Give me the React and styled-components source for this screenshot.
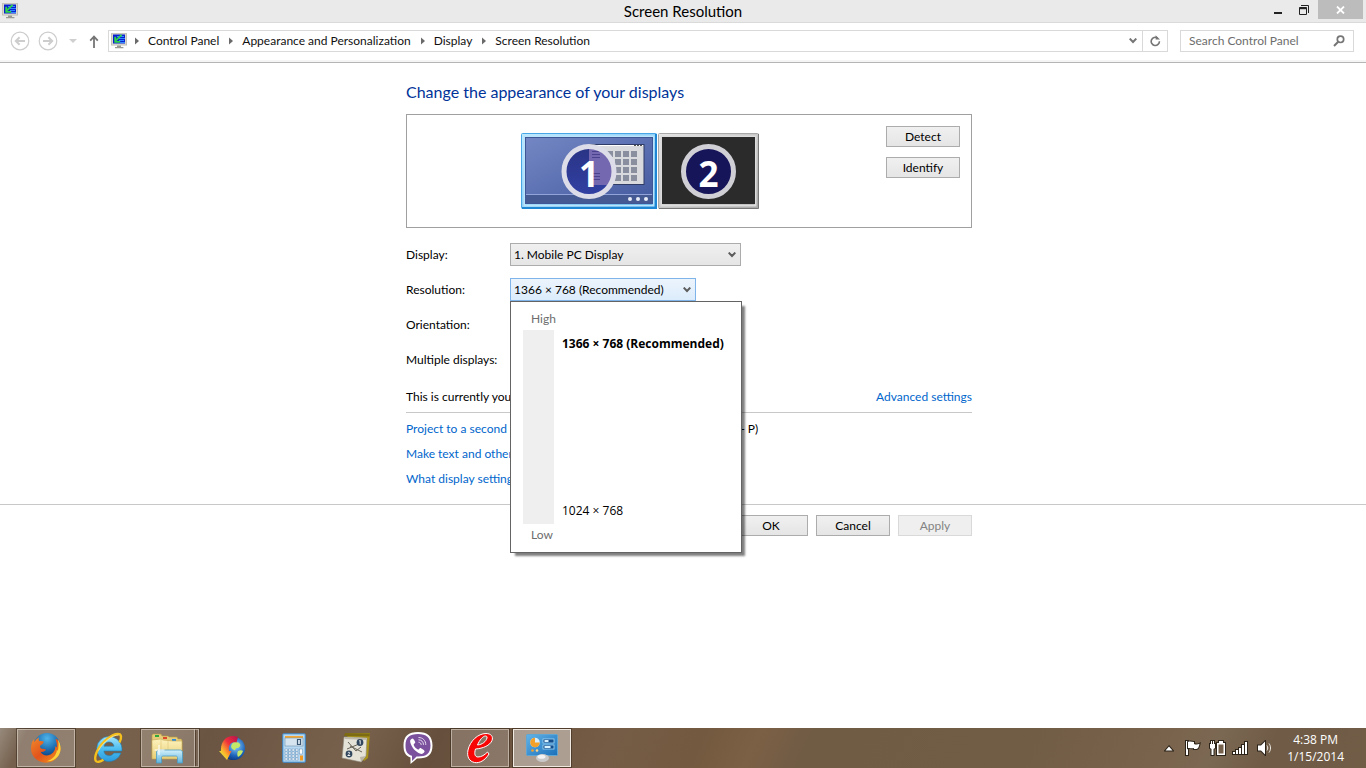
import React, { useState } from 'react';
import styled, { createGlobalStyle, css } from 'styled-components';

const GlobalStyle = createGlobalStyle`
  * {
    box-sizing: border-box;
  }

  body {
    margin: 0;
    background: #fff;
    color: #000;
    font-family: Lato, 'Open Sans', sans-serif;
    font-size: 12px;
    line-height: 16px;
  }

  button, input, select {
    font: inherit;
    color: inherit;
  }
`;

const CRUMBS = ['Control Panel', 'Appearance and Personalization', 'Display', 'Screen Resolution'];

/* ---------- icons ---------- */

const ScreenIcon = () => (
  <svg width="16" height="16" viewBox="0 0 16 16" aria-hidden="true">
    <rect x="0" y="0" width="16" height="12.5" rx="0.6" fill="#bdbbb0" />
    <rect x="0.8" y="0.6" width="14.4" height="11.2" fill="#d9d8cf" />
    <rect x="2" y="1.5" width="12" height="9" fill="#0a1fd0" />
    <path d="M6 3.5h7M8 5.5h6M8 7.5h5M9 9.5h5" stroke="#2f8bff" strokeWidth="1" />
    <path d="M10.6 1.8L5 7.4M4.2 3.8v5h5" stroke="#2ed34a" strokeWidth="1.8" fill="none" />
    <path d="M6 12.5h4v1.4h2.4v1.3H4v-1.3h2z" fill="#9a9a92" />
  </svg>
);

const ArrowCircle = ({ flip }) => (
  <svg width="20" height="20" viewBox="0 0 20 20" aria-hidden="true">
    <circle cx="10" cy="10" r="8.8" fill="none" stroke="#cdcdcd" strokeWidth="1.2" />
    <path
      d={flip ? 'M5 10h9M10.4 6.2l3.8 3.8-3.8 3.8' : 'M15 10H6M9.6 6.2L5.8 10l3.8 3.8'}
      fill="none"
      stroke="#cdcdcd"
      strokeWidth="2"
    />
  </svg>
);

const UpArrow = () => (
  <svg width="10" height="13" viewBox="0 0 10 13" aria-hidden="true">
    <path d="M5 13V2M1.2 5.6L5 1.6l3.8 4" fill="none" stroke="#757575" strokeWidth="1.8" />
  </svg>
);

const SmallTriangle = () => (
  <svg width="4" height="8" viewBox="0 0 4 8" aria-hidden="true">
    <path d="M0 0.5L4 4L0 7.5z" fill="#6a6a6a" />
  </svg>
);

const Chevron = ({ color = '#5c5c5c' }) => (
  <svg width="8" height="6" viewBox="0 0 8 6" aria-hidden="true">
    <path d="M0.7 0.6L4 4L7.3 0.6" fill="none" stroke={color} strokeWidth="2" />
  </svg>
);

const RefreshIcon = () => (
  <svg width="11" height="12" viewBox="0 0 11 12" aria-hidden="true">
    <path d="M7.6 3A4.1 4.1 0 1 0 9.4 6.2" fill="none" stroke="#757575" strokeWidth="1.6" />
    <path d="M5.6 0.2v4.4h4.4z" fill="#757575" />
  </svg>
);

const SearchIcon = () => (
  <svg width="12" height="12" viewBox="0 0 12 12" aria-hidden="true">
    <circle cx="7.5" cy="4.3" r="3.2" fill="none" stroke="#757575" strokeWidth="1.7" />
    <path d="M5.2 6.8L1 11" stroke="#757575" strokeWidth="2" />
  </svg>
);

const MinimizeIcon = () => (
  <svg width="12" height="12" viewBox="1 0 12 12" aria-hidden="true">
    <rect x="2" y="8" width="8" height="2" fill="#222" />
  </svg>
);

const RestoreIcon = () => (
  <svg width="12" height="12" viewBox="1 0 12 12" aria-hidden="true">
    <path d="M3 1.5h7.5V9" fill="none" stroke="#222" />
    <path d="M1.5 3.5h7v7h-7z" fill="none" stroke="#222" />
    <path d="M1 4.5h8" stroke="#222" strokeWidth="1.4" />
  </svg>
);

const CloseIcon = () => (
  <svg width="9" height="8" viewBox="0 0 9 8" aria-hidden="true">
    <path d="M1 0.5L8 7.5M8 0.5L1 7.5" stroke="#fff" strokeWidth="1.8" />
  </svg>
);

const FirefoxIcon = () => (
  <svg width="32" height="32" viewBox="0 0 32 32" aria-hidden="true">
    <defs>
      <radialGradient id="ffGlobe" cx="0.5" cy="0.2" r="0.8">
        <stop offset="0" stopColor="#4fb4e8" />
        <stop offset="0.6" stopColor="#1763a8" />
        <stop offset="1" stopColor="#0d2f66" />
      </radialGradient>
      <linearGradient id="ffFox" x1="0" y1="0" x2="1" y2="1">
        <stop offset="0" stopColor="#f08a2c" />
        <stop offset="0.5" stopColor="#e2531b" />
        <stop offset="1" stopColor="#f39a1f" />
      </linearGradient>
    </defs>
    <circle cx="17" cy="14.5" r="13.4" fill="url(#ffGlobe)" />
    <path d="M27 7c4 5 5 12 1 17.500C24 30 17.500 32 11.500 30 4 27.500 0 21 1.200 14 1.500 11 2.500 9 3.500 7.500L4.500 10C5.500 8 7 6.300 9 5.200c-.6 1.600-.3 2.800.3 4 1.600-.4 3-.2 4.500.4-.3 2-2 3-3.600 4.200-.3 1.200 0 2 .8 2.600 1.500.7 3.600.2 5 1.200-.6 2-3.500 2.600-5.500 2.200 1.500 3.400 6 4.400 9.300 3 3.600-1.500 5.700-4.800 5.400-8.800l1.500 1.500c.5-3-.1-6-1.200-8z" fill="url(#ffFox)" />
    <path d="M28 7.500c3.500 5.500 3.500 12 .2 16.500-3 4-7.500 5.600-11.500 5.200 6-1.600 9.600-6 10.200-11.200l1 .8c.9-4 .8-8 .1-11.300z" fill="#fbd43c" />
  </svg>
);

const IeIcon = () => (
  <svg width="32" height="32" viewBox="0 0 32 32" aria-hidden="true">
    <defs>
      <linearGradient id="ieBody" x1="0" y1="0" x2="0" y2="1">
        <stop offset="0" stopColor="#a4e4fb" />
        <stop offset="0.5" stopColor="#4cbdf0" />
        <stop offset="1" stopColor="#2a9ade" />
      </linearGradient>
    </defs>
    <path d="M17 4.500a12.500 12.500 0 1 0 12 16.500h-7.300c-1 1.800-2.600 2.700-4.600 2.700-2.900 0-5-1.900-5.200-4.700h18A13 13 0 0 0 17 4.500zM12 14.200c.5-2.600 2.400-4.200 5-4.200s4.600 1.600 5 4.200z" fill="url(#ieBody)" stroke="#1d7fb8" strokeWidth="0.6" />
    <path d="M27.500 10.500C30 5.500 29.500 2 26 2 20 2 10 9.500 5.500 18.500 2 25.500 2.500 30.500 6.800 29.800c1.500-.2 3-.9 4.600-2" fill="none" stroke="#f5bf1d" strokeWidth="2.400" />
    <path d="M26.500 3C20.500 3 11 10 6.500 18.500" fill="none" stroke="#fff0a0" strokeWidth="0.800" />
  </svg>
);

const ExplorerIcon = () => (
  <svg width="32" height="32" viewBox="0 0 32 32" aria-hidden="true">
    <defs>
      <linearGradient id="folder" x1="0" y1="0" x2="0" y2="1">
        <stop offset="0" stopColor="#fdf3bd" />
        <stop offset="1" stopColor="#e8cd75" />
      </linearGradient>
      <linearGradient id="folderClip" x1="0" y1="0" x2="0" y2="1">
        <stop offset="0" stopColor="#d3f0fb" />
        <stop offset="1" stopColor="#5eb3dd" />
      </linearGradient>
    </defs>
    <path d="M1 8V3l1-1h8l1 2h6l1 1h8l1 2h3l1 1v18H1z" fill="#e6cc79" stroke="#b99a45" strokeWidth="0.600" />
    <rect x="4" y="3" width="4" height="2" fill="#2fa83d" />
    <rect x="12" y="5" width="4" height="2" fill="#dd4a2b" />
    <rect x="21" y="7" width="4" height="2" fill="#2c8de0" />
    <path d="M1 8l9-1 2 1 10 1h9v18H1z" fill="url(#folder)" stroke="#c3a552" strokeWidth="0.600" />
    <path d="M17 9v18M10 7v19" stroke="#e0c87c" strokeWidth="0.700" />
    <path d="M5.500 31V19.500l2-1.500h22l2 1.500V31h-5v-5.500c0-1-.8-1.500-1.800-1.500h-12.400c-1 0-1.800.5-1.800 1.500V31z" fill="url(#folderClip)" stroke="#4a9cc6" strokeWidth="0.800" />
    <path d="M8 13v10M3.500 18h10" stroke="#fff" strokeWidth="1" />
  </svg>
);

const DownloadGlobeIcon = () => (
  <svg width="28" height="28" viewBox="0 0 28 28" aria-hidden="true">
    <defs>
      <linearGradient id="idmArrow" x1="1" y1="0" x2="0" y2="1">
        <stop offset="0" stopColor="#b5124f" />
        <stop offset="0.400" stopColor="#ef2f3c" />
        <stop offset="0.700" stopColor="#fbb52c" />
        <stop offset="0.850" stopColor="#e3e43a" />
        <stop offset="1" stopColor="#7fd321" />
      </linearGradient>
      <radialGradient id="idmGlobe" cx="0.600" cy="0.400" r="0.700">
        <stop offset="0" stopColor="#8fd0f9" />
        <stop offset="0.600" stopColor="#1c63bb" />
        <stop offset="1" stopColor="#0a2c6e" />
      </radialGradient>
    </defs>
    <circle cx="15.500" cy="14.500" r="11.500" fill="url(#idmGlobe)" />
    <path d="M14 10c2-3 7-2 8 0s-1 4-3 4-1 3-3 2-4-3-2-6zM20 17c2-1 4-1 5 0-1 3-3 5-5 6-1-2-1-4 0-6z" fill="#c3e86a" />
    <path d="M20 3C11-.5 2.500 5 3 17H1l8 9 4.500-9H11C10 11 13 7.500 18.500 8.500z" fill="url(#idmArrow)" />
  </svg>
);

const CalculatorIcon = () => (
  <svg width="24" height="32" viewBox="0 0 24 32" aria-hidden="true">
    <rect x="0.500" y="1.500" width="23" height="29" rx="1.500" fill="#8ebfe4" stroke="#4d83b4" />
    <rect x="2" y="3" width="20" height="26" fill="#b7d8f0" />
    <rect x="3" y="4" width="18" height="2" fill="#f2a635" />
    <rect x="3" y="6" width="18" height="8" fill="#d6e4ef" stroke="#6d8fb0" strokeWidth="0.600" />
    <path d="M15.500 7.500h3v5h-3z" fill="none" stroke="#3b5876" strokeWidth="1.200" />
    {[17, 20, 23, 26].map((y) =>
      [3, 6.5, 10, 13.5].map((x) => <rect key={`${x}-${y}`} x={x} y={y} width="2.500" height="2" fill="#fff" stroke="#5f8db8" strokeWidth="0.500" />)
    )}
    <rect x="17.500" y="17" width="3" height="5" fill="#fff" stroke="#5f8db8" strokeWidth="0.500" />
    <rect x="18" y="23.500" width="3" height="5" fill="#f19a25" />
  </svg>
);

const JournalIcon = () => (
  <svg width="32" height="32" viewBox="0 0 32 32" aria-hidden="true">
    <path d="M5 1h25l-2 25-4 3z" fill="#a99419" />
    <path d="M5 1l25 .5-.5 3L4 4z" fill="#7d6b14" />
    <path d="M4 5l23 1-1 18-5 6L2 26z" fill="#e5e2d8" stroke="#8e8a7c" strokeWidth="0.600" />
    <path d="M26 24l-5 6-1-5z" fill="#b9b4a5" />
    <path d="M5 5l22 1v2L4.500 7z" fill="#bdb8a8" />
    <path d="M8 10l8 9 5-4M7 17l12-5M10 14l12 6" fill="none" stroke="#676256" strokeWidth="1" />
    <circle cx="20" cy="10.500" r="3.400" fill="#30475e" />
    <circle cx="9" cy="22" r="3.400" fill="#30475e" />
    <path d="M19.200 9l1-.6v4M7.800 20.800c1.800-1.500 2.800.3 0 2.700h2.500" fill="none" stroke="#fff" strokeWidth="0.900" />
  </svg>
);

const ViberIcon = () => (
  <svg width="32" height="34" viewBox="0 0 32 34" aria-hidden="true">
    <path d="M16 1C6.500 1 1.500 5 1.500 14.500c0 6.500 2 10.300 7 12V33l6.500-5.500H16c9.500 0 14.500-3.500 14.500-13S25.500 1 16 1z" fill="#fff" />
    <path d="M16 3C7.500 3 3.500 6.500 3.500 14.500c0 5.500 1.500 8.800 6.500 10.300V30l4.500-4.500H16c8.500 0 12.500-3 12.500-11S24.500 3 16 3z" fill="#7b519d" />
    <path d="M10.500 7.500c-1.500.5-2.700 1.600-2.300 3.500 1.300 5.500 5 9.700 10.300 11.800 1.700.5 3-.4 4-2 .4-.9 0-1.400-3.500-3.600-1-.4-1.600.5-2.300 1.300-1 .4-5-2.500-5-5.300.6-.8 1.800-1.200 1.500-2.300-1-2-1.900-3.300-2.700-3.400z" fill="#fff" />
    <path d="M16.500 11.200c1.700.1 2.600 1.100 2.700 2.700M16.500 8.800c3 .1 4.900 2 5 5M16.500 6.500c4.500.1 7.200 3 7.300 7.400" fill="none" stroke="#e6dcf0" strokeWidth="1" />
  </svg>
);

const RedEIcon = () => (
  <svg width="30" height="32" viewBox="0 0 30 32" aria-hidden="true">
    <path
      d="M24 22c-4 6.500-9.500 9.500-14.500 8.500C4.500 29.500 1.500 25 3 18 5 9 13 1.500 21 1.500c5 0 7.500 3 6 7-2 5-9 8-16.500 8.500-1.500 5-.5 8 2.500 8 3.500 0 6.500-2 9.500-5zM12.500 13c5-.5 8.500-3.500 9.500-7 .3-1.500-.5-2-1.500-2-2.500 0-6 4-8 9z"
      fill="#f80606"
      stroke="#fff"
      strokeWidth="1"
    />
  </svg>
);

const ControlPanelIcon = () => (
  <svg width="34" height="30" viewBox="0 0 34 30" aria-hidden="true">
    <defs>
      <linearGradient id="cpScreen" x1="0" y1="0" x2="1" y2="1">
        <stop offset="0" stopColor="#62b3e8" />
        <stop offset="1" stopColor="#1b70b9" />
      </linearGradient>
    </defs>
    <rect x="1.500" y="1.500" width="31" height="21" rx="1" fill="url(#cpScreen)" stroke="#5fa6d4" />
    <circle cx="10" cy="9.500" r="4.800" fill="#d9edf8" />
    <path d="M10 4.700a4.800 4.800 0 1 0 4.800 4.800H10z" fill="#f4a12b" />
    <rect x="18" y="6" width="11" height="4" fill="#124c8c" stroke="#a6d8f4" strokeWidth="0.800" />
    <rect x="18" y="12" width="11" height="4" fill="#124c8c" stroke="#a6d8f4" strokeWidth="0.800" />
    <path d="M19.500 8h4M19.500 14h6" stroke="#d9f2ff" strokeWidth="2" />
    <circle cx="7.500" cy="17.500" r="1.300" fill="#f4a12b" />
    <circle cx="12" cy="17.500" r="1.300" fill="#ffd38a" />
    <ellipse cx="17.500" cy="25" rx="6.500" ry="4" fill="#c9c9c9" />
    <ellipse cx="16.500" cy="23.800" rx="4" ry="2" fill="#f2f2f2" />
  </svg>
);

const trayOutline = { stroke: '#2b2218', strokeWidth: 2, paintOrder: 'stroke' };

const TrayArrow = () => (
  <svg width="10" height="7" viewBox="0 0 10 7" aria-hidden="true">
    <path d="M5 1.500L8.500 5.500h-7z" fill="#fff" {...trayOutline} />
  </svg>
);

const FlagIcon = () => (
  <svg width="18" height="16" viewBox="0 0 18 16" aria-hidden="true">
    <path d="M2 1h2v14H2z" fill="#fff" {...trayOutline} />
    <path d="M4 2c2-1 4 0 6 0v6c-2 1-4-.5-6 0zM10 4c2 .800 4 .600 5.500-.200-.5 3-1.500 5-3 5.200H10z" fill="#fff" {...trayOutline} />
  </svg>
);

const BatteryIcon = () => (
  <svg width="18" height="16" viewBox="0 0 18 16" aria-hidden="true">
    <path d="M3 1h1v3h1V1h1v3h1v4L5.500 9V15h-2V9L2 8V4h1z" fill="#fff" {...trayOutline} />
    <path d="M9 3h2V1h4v2h2v12H9z" fill="#fff" {...trayOutline} />
    <path d="M10.500 4.500h5v9h-5z" fill="#75604c" />
  </svg>
);

const SignalIcon = () => (
  <svg width="18" height="14" viewBox="0 0 18 14" aria-hidden="true">
    {[2, 4, 6, 9, 12].map((h, i) => (
      <rect key={h} x={1 + i * 3} y={13 - h} width="2" height={h} fill="#fff" {...trayOutline} />
    ))}
  </svg>
);

const VolumeIcon = () => (
  <svg width="16" height="16" viewBox="0 0 16 16" aria-hidden="true">
    <path d="M1 5.500h3L8 1.500v13l-4-4H1z" fill="#fff" {...trayOutline} />
    <path d="M10 5.500c1 1.500 1 3.500 0 5M12 3.500c2 2.700 2 6.300 0 9" fill="none" stroke="#f0ece6" strokeWidth="1" />
  </svg>
);

const WindowsLogo = styled(({ className }) => (
  <svg className={className} width="14" height="12" viewBox="0 0 14 12" aria-hidden="true">
    <path d="M0 2l6-1v5H0zM7 1l7-1v6H7zM0 7h6v5l-6-1zM7 7h7v5H7z" fill="#1b6fb5" />
  </svg>
))`
  margin: 0 3px;
  vertical-align: middle;
`;

const MonitorOne = () => (
  <svg width="137" height="76" viewBox="0 0 137 76" aria-hidden="true">
    <defs>
      <linearGradient id="m1Frame" x1="0" y1="0" x2="1" y2="1">
        <stop offset="0" stopColor="#bfe9ff" />
        <stop offset="0.500" stopColor="#8fd0f8" />
        <stop offset="1" stopColor="#1d8fe0" />
      </linearGradient>
      <linearGradient id="m1Screen" x1="0" y1="0" x2="1" y2="1">
        <stop offset="0" stopColor="#7487c4" />
        <stop offset="1" stopColor="#435a9f" />
      </linearGradient>
      <linearGradient id="m1Disc" x1="0" y1="0" x2="0" y2="1">
        <stop offset="0" stopColor="#2a3485" />
        <stop offset="1" stopColor="#3140a3" />
      </linearGradient>
    </defs>
    <rect x="0.500" y="0.500" width="135" height="75" rx="1" fill="url(#m1Frame)" stroke="#46a6e6" />
    <path d="M135 1v74H1" fill="none" stroke="#1e86d2" strokeWidth="2" />
    <rect x="3.500" y="3.500" width="129" height="69" fill="none" stroke="#b9e4fb" strokeWidth="2" />
    <rect x="4.500" y="4.500" width="127" height="66" fill="url(#m1Screen)" stroke="#3f5696" />
    <path d="M5 62h126v8H5z" fill="#455a92" />
    <path d="M5 61.500h126" stroke="#91a3d8" />
    <rect x="68" y="11.500" width="55" height="40" fill="#d8dadd" stroke="#2f3c66" />
    <path d="M68 12.500h54" stroke="#fff" />
    <path d="M113 12.500h8" stroke="#555" strokeDasharray="2 1" />
    {[18, 26, 34, 42].map((y) =>
      [86, 94, 102, 110].map((x) => <rect key={`${x}-${y}`} x={x} y={y} width="6" height="6" fill="#8a8f9f" />)
    )}
    <circle cx="68" cy="38.500" r="25" fill="url(#m1Disc)" />
    <path d="M68 13.500a25 25 0 0 1 21 38.500H68z" fill="#7468b0" />
    <path d="M71 18.500h8M71 21.500h8M71 24.500h8M71 40.500h8M71 43.500h8M71 46.500h8" stroke="#4a428c" />
    <circle cx="68" cy="38.500" r="25" fill="none" stroke="#dddde9" strokeWidth="5" />
    <g fill="#e8ecf8">
      <circle cx="109" cy="66" r="2" />
      <circle cx="117" cy="66" r="2" />
      <circle cx="125" cy="66" r="2" />
    </g>
  </svg>
);

const MonitorTwo = () => (
  <svg width="102" height="76" viewBox="0 0 102 76" aria-hidden="true">
    <defs>
      <linearGradient id="m2Frame" x1="0" y1="0" x2="1" y2="1">
        <stop offset="0" stopColor="#e6e6e6" />
        <stop offset="1" stopColor="#a8a8a8" />
      </linearGradient>
    </defs>
    <rect x="0.500" y="0.500" width="100" height="75" rx="1" fill="url(#m2Frame)" stroke="#a8a8a8" />
    <path d="M100.500 1v74.500H1" fill="none" stroke="#777" strokeWidth="1" />
    <rect x="3.500" y="3.500" width="94" height="69" fill="none" stroke="#dcdcdc" strokeWidth="2" />
    <rect x="4" y="4" width="93" height="67" fill="#2b2b2b" />
    <circle cx="50.500" cy="38.500" r="25" fill="#17155a" stroke="#d0cfd6" strokeWidth="5" />
  </svg>
);

/* ---------- window chrome ---------- */

const Page = styled.div`
  min-height: 100vh;
  display: flex;
  flex-direction: column;
`;

const TitleBar = styled.header`
  display: grid;
  grid-template-columns: 1fr auto 1fr;
  height: 23px;
  background: #eaeaea;
  border-bottom: 1px solid #dadada;
`;

const TitleIcon = styled.span`
  display: flex;
  align-items: center;
  padding-left: 2px;
`;

const WindowTitle = styled.h1`
  margin: 0;
  font-size: 15px;
  font-weight: 400;
  line-height: 22px;
`;

const WindowButtons = styled.div`
  display: flex;
  justify-content: flex-end;
  align-items: flex-start;
  padding-right: 3px;
`;

const WindowButton = styled.button`
  display: flex;
  align-items: center;
  justify-content: center;
  width: ${({ $close }) => ($close ? '45px' : '26px')};
  height: 19px;
  padding: 0;
  border: 0;
  background: ${({ $close }) => ($close ? '#bcbcbc' : 'transparent')};
`;

const Toolbar = styled.div`
  display: flex;
  align-items: center;
  height: 40px;
  padding: 0 12px 3px 10px;
  border-bottom: 1px solid #b5b5b5;
  box-shadow: inset 0 -2px #f5f5f5;
`;

const ToolButton = styled.button`
  display: flex;
  align-items: center;
  justify-content: center;
  width: ${({ $width }) => $width}px;
  height: 20px;
  padding: 0;
  border: 0;
  background: none;
`;

const AddressBar = styled.nav`
  display: flex;
  align-items: center;
  flex: 1;
  height: 22px;
  margin-right: 12px;
  padding-left: 2px;
  border: 1px solid #d9d9d9;
`;

const Crumbs = styled.ol`
  display: flex;
  flex: 1;
  gap: 2px;
  margin: 0;
  padding: 0;
  list-style: none;
`;

const Crumb = styled.li`
  display: flex;
  align-items: center;

  svg {
    margin: 0 9px 0 8px;
  }

  a {
    color: #111;
    text-decoration: none;
  }
`;

const RefreshCell = styled.div`
  display: flex;
  align-items: center;
  height: 100%;
  border-left: 1px solid #d9d9d9;
`;

const SearchBox = styled.label`
  display: flex;
  align-items: center;
  width: 174px;
  height: 22px;
  padding: 0 8px;
  border: 1px solid #d9d9d9;

  input {
    flex: 1;
    min-width: 0;
    padding: 0;
    border: 0;
    outline: 0;
    background: none;
  }

  input::placeholder {
    color: #6d6d6d;
    opacity: 1;
  }
`;

/* ---------- content ---------- */

const Main = styled.main`
  flex: 1;
`;

const Content = styled.div`
  max-width: 578px;
  margin: 0 auto;
  padding-left: 12px;
`;

const Heading = styled.h2`
  margin: 0;
  padding: 18px 0 12px;
  color: #003399;
  font-size: 16px;
  font-weight: 400;
  line-height: 21px;
`;

const Preview = styled.section`
  display: grid;
  grid-template-columns: 1fr auto;
  gap: 24px;
  height: 114px;
  padding: 11px;
  border: 1px solid #a0a0a0;
`;

const Monitors = styled.div`
  display: flex;
  justify-content: center;
  padding-top: 7px;
`;

const Monitor = styled.figure`
  display: grid;
  place-items: center;
  height: 76px;
  margin: 0;

  > * {
    grid-area: 1 / 1;
  }
`;

const MonitorNumber = styled.figcaption`
  color: #fff;
  font-family: 'Open Sans', sans-serif;
  font-size: 35px;
  font-weight: 700;
  line-height: 40px;
  padding-top: 5px;
`;

const PreviewButtons = styled.div`
  display: flex;
  flex-direction: column;
  gap: 10px;
`;

const Button = styled.button`
  width: 74px;
  height: 21px;
  padding: 0;
  border: 1px solid #acacac;
  background: linear-gradient(#f0f0f0, #e5e5e5);
  line-height: 19px;

  &:disabled {
    border-color: #d9d9d9;
    background: #efefef;
    color: #838383;
  }
`;

const Settings = styled.div`
  display: grid;
  grid-template-columns: 104px 1fr;
  grid-auto-rows: 23px;
  row-gap: 12px;
  align-items: center;
  padding: 15px 0 18px;
`;

const SelectWrap = styled.div`
  display: grid;
  align-items: center;
  position: relative;
  width: ${({ $width }) => $width}px;

  > select,
  > svg {
    grid-area: 1 / 1;
  }

  > svg {
    justify-self: end;
    margin-right: 5px;
    pointer-events: none;
  }
`;

const Select = styled.select`
  appearance: none;
  width: 100%;
  height: 23px;
  padding: 0 3px;
  border: 1px solid #acacac;
  border-radius: 0;
  outline: 0;
  background: linear-gradient(#f0f0f0, #e5e5e5);

  ${({ $open }) =>
    $open &&
    css`
      border-color: #7eb4ea;
      background: linear-gradient(#ecf4fc, #dcecfc);
    `}
`;

const Popup = styled.div`
  position: absolute;
  z-index: 1;
  top: 100%;
  left: 0;
  width: 232px;
  height: 252px;
  padding: 6px 12px;
  border: 1px solid #646464;
  background: #fff;
  box-shadow: 4px 4px 2px -1px rgba(0, 0, 0, 0.5);
`;

const PopupEdge = styled.div`
  padding-left: 8px;
  color: #6d6d6d;
  line-height: 22px;
`;

const SliderRow = styled.div`
  display: flex;
  gap: 8px;
  height: 194px;
`;

const Slider = styled.input`
  appearance: none;
  writing-mode: vertical-lr;
  direction: rtl;
  width: 31px;
  height: 194px;
  margin: 0;
  background: #efefef;

  &::-webkit-slider-thumb {
    appearance: none;
    width: 31px;
    height: 11px;
    background: transparent;
  }
`;

const SliderLabels = styled.div`
  display: flex;
  flex-direction: column;
  justify-content: space-between;
  padding: 6px 0 5px;
  font-family: 'Open Sans', sans-serif;
  white-space: nowrap;
`;

const SliderLabel = styled.span`
  font-weight: ${({ $active }) => ($active ? 700 : 400)};
`;

const MainDisplay = styled.div`
  display: flex;
  justify-content: space-between;
  padding-bottom: 7px;
  border-bottom: 1px solid #c8c8c8;
`;

const Link = styled.a`
  color: #0066cc;
  text-decoration: none;
`;

const Links = styled.div`
  display: flex;
  flex-direction: column;
  gap: 9px;
  padding: 8px 0 17px;

  p {
    height: 16px;
    margin: 0;
  }
`;

const Footer = styled.footer`
  border-top: 1px solid #c8c8c8;
`;

const FooterButtons = styled.div`
  display: flex;
  justify-content: flex-end;
  gap: 8px;
  padding-top: 10px;
`;

/* ---------- taskbar ---------- */

const Taskbar = styled.div`
  display: flex;
  justify-content: space-between;
  height: 40px;
  padding: 1px 22px 1px 17px;
  background: linear-gradient(115deg, #978a7c 0, #75604d 26px, #77604b 140px, #6a5442 190px, #78614c 330px, #664f3c 400px, #755c46 560px, #73593f 640px, #7c6045 690px, #705b45 740px, #715c46 940px, #7a634c 1060px, #7b6853 1110px, #6f5b46 1160px, #745e47 1366px);
`;

const Apps = styled.div`
  display: flex;
  gap: 4px;
`;

const TaskButton = styled.button`
  display: flex;
  align-items: center;
  justify-content: center;
  width: 58px;
  height: 38px;
  padding: 0;
  border: 1px solid transparent;
  background: none;

  ${({ $state }) =>
    $state &&
    css`
      border-color: rgba(225, 215, 203, 0.6);
      background: rgba(255, 255, 255, 0.2);
      box-shadow: 0 0 0 1px rgba(50, 35, 22, 0.5);
    `}

  ${({ $state }) =>
    $state === 'active' &&
    css`
      border-color: #efe9e2;
      background: rgba(255, 255, 255, 0.42);
    `}

  ${({ $stacked }) =>
    $stacked &&
    css`
      padding-right: 6px;
      background: linear-gradient(90deg, rgba(255, 255, 255, 0.2) 52px, rgba(225, 215, 203, 0.7) 52px 53px, rgba(50, 35, 22, 0.4) 53px 54px, rgba(255, 255, 255, 0.1) 54px);
    `}
`;

const Tray = styled.div`
  display: flex;
  align-items: center;
  color: #fff;
`;

const TrayButton = styled.button`
  display: flex;
  align-items: center;
  justify-content: center;
  width: 24px;
  height: 38px;
  padding: 0;
  border: 0;
  background: none;
`;

const Clock = styled.time`
  margin-left: 10px;
  font-family: 'Open Sans', sans-serif;
  text-align: center;
  line-height: 17px;
`;

const APPS = [
  { name: 'Firefox', Icon: FirefoxIcon, state: 'open' },
  { name: 'Internet Explorer', Icon: IeIcon },
  { name: 'File Explorer', Icon: ExplorerIcon, state: 'open', stacked: true },
  { name: 'Download Manager', Icon: DownloadGlobeIcon },
  { name: 'Calculator', Icon: CalculatorIcon },
  { name: 'Journal', Icon: JournalIcon },
  { name: 'Viber', Icon: ViberIcon },
  { name: 'Encyclopedia', Icon: RedEIcon, state: 'open' },
  { name: 'Control Panel', Icon: ControlPanelIcon, state: 'active' },
];

const TRAY = [
  { name: 'Show hidden icons', Icon: TrayArrow },
  { name: 'Action Center', Icon: FlagIcon },
  { name: 'Battery', Icon: BatteryIcon },
  { name: 'Network', Icon: SignalIcon },
  { name: 'Volume', Icon: VolumeIcon },
];

const RESOLUTIONS = ['1024 × 768', '1366 × 768 (Recommended)'];

const SelectField = ({ id, label, width, options, open, children, ...rest }) => (
  <>
    <label htmlFor={id}>{label}</label>
    <SelectWrap $width={width}>
      <Select id={id} $open={open} {...rest}>
        {options.map((option) => (
          <option key={option}>{option}</option>
        ))}
      </Select>
      <Chevron />
      {children}
    </SelectWrap>
  </>
);

const App = () => {
  const [level, setLevel] = useState(1);

  return (
    <Page>
      <GlobalStyle />
      <TitleBar>
        <TitleIcon>
          <ScreenIcon />
        </TitleIcon>
        <WindowTitle>Screen Resolution</WindowTitle>
        <WindowButtons>
          <WindowButton aria-label="Minimize"><MinimizeIcon /></WindowButton>
          <WindowButton aria-label="Restore"><RestoreIcon /></WindowButton>
          <WindowButton aria-label="Close" $close><CloseIcon /></WindowButton>
        </WindowButtons>
      </TitleBar>

      <Toolbar>
        <ToolButton $width={20} aria-label="Back"><ArrowCircle /></ToolButton>
        <ToolButton $width={36} aria-label="Forward"><ArrowCircle flip /></ToolButton>
        <ToolButton $width={14} aria-label="Recent locations">
          <svg width="8" height="4" viewBox="0 0 8 4" aria-hidden="true">
            <path d="M0 0h8L4 4z" fill="#cfcfcf" />
          </svg>
        </ToolButton>
        <ToolButton $width={28} aria-label="Up"><UpArrow /></ToolButton>
        <AddressBar aria-label="Address">
          <ScreenIcon />
          <Crumbs>
            {CRUMBS.map((crumb) => (
              <Crumb key={crumb}>
                <SmallTriangle />
                <a href="#crumb">{crumb}</a>
              </Crumb>
            ))}
          </Crumbs>
          <ToolButton $width={18} aria-label="Previous locations"><Chevron color="#757575" /></ToolButton>
          <RefreshCell>
            <ToolButton $width={24} aria-label="Refresh"><RefreshIcon /></ToolButton>
          </RefreshCell>
        </AddressBar>
        <SearchBox>
          <input type="search" placeholder="Search Control Panel" aria-label="Search Control Panel" />
          <SearchIcon />
        </SearchBox>
      </Toolbar>

      <Main>
        <Content>
          <Heading>Change the appearance of your displays</Heading>
          <Preview>
            <Monitors>
              <Monitor>
                <MonitorOne />
                <MonitorNumber>1</MonitorNumber>
              </Monitor>
              <Monitor>
                <MonitorTwo />
                <MonitorNumber>2</MonitorNumber>
              </Monitor>
            </Monitors>
            <PreviewButtons>
              <Button>Detect</Button>
              <Button>Identify</Button>
            </PreviewButtons>
          </Preview>

          <Settings>
            <SelectField id="display" label="Display:" width={231} options={['1. Mobile PC Display']} />
            <SelectField
              id="resolution"
              label="Resolution:"
              width={186}
              options={RESOLUTIONS}
              open
              value={RESOLUTIONS[level]}
              onChange={(e) => setLevel(RESOLUTIONS.indexOf(e.target.value))}
            >
              <Popup>
                <PopupEdge>High</PopupEdge>
                <SliderRow>
                  <Slider
                    type="range"
                    min="0"
                    max="1"
                    value={level}
                    aria-label="Resolution"
                    onChange={(e) => setLevel(Number(e.target.value))}
                  />
                  <SliderLabels>
                    <SliderLabel $active={level === 1}>{RESOLUTIONS[1]}</SliderLabel>
                    <SliderLabel $active={level === 0}>{RESOLUTIONS[0]}</SliderLabel>
                  </SliderLabels>
                </SliderRow>
                <PopupEdge>Low</PopupEdge>
              </Popup>
            </SelectField>
            <SelectField id="orientation" label="Orientation:" width={186} options={['Landscape']} />
            <SelectField id="multiple" label="Multiple displays:" width={231} options={['Extend these displays']} />
          </Settings>

          <MainDisplay>
            <span>This is currently your main display.</span>
            <Link href="#advanced">Advanced settings</Link>
          </MainDisplay>

          <Links>
            <p>
              <Link href="#project">Project to a second screen</Link> (or press the Windows logo key <WindowsLogo /> + P)
            </p>
            <Link href="#text-size">Make text and other items larger or smaller</Link>
            <Link href="#help">What display settings should I choose?</Link>
          </Links>
        </Content>

        <Footer>
          <Content>
            <FooterButtons>
              <Button>OK</Button>
              <Button>Cancel</Button>
              <Button disabled>Apply</Button>
            </FooterButtons>
          </Content>
        </Footer>
      </Main>

      <Taskbar>
        <Apps>
          {APPS.map(({ name, Icon, state, stacked }) => (
            <TaskButton key={name} aria-label={name} $state={state} $stacked={stacked}>
              <Icon />
            </TaskButton>
          ))}
        </Apps>
        <Tray>
          {TRAY.map(({ name, Icon }) => (
            <TrayButton key={name} aria-label={name}>
              <Icon />
            </TrayButton>
          ))}
          <Clock>
            4:38 PM
            <br />
            1/15/2014
          </Clock>
        </Tray>
      </Taskbar>
    </Page>
  );
};

export default App;
